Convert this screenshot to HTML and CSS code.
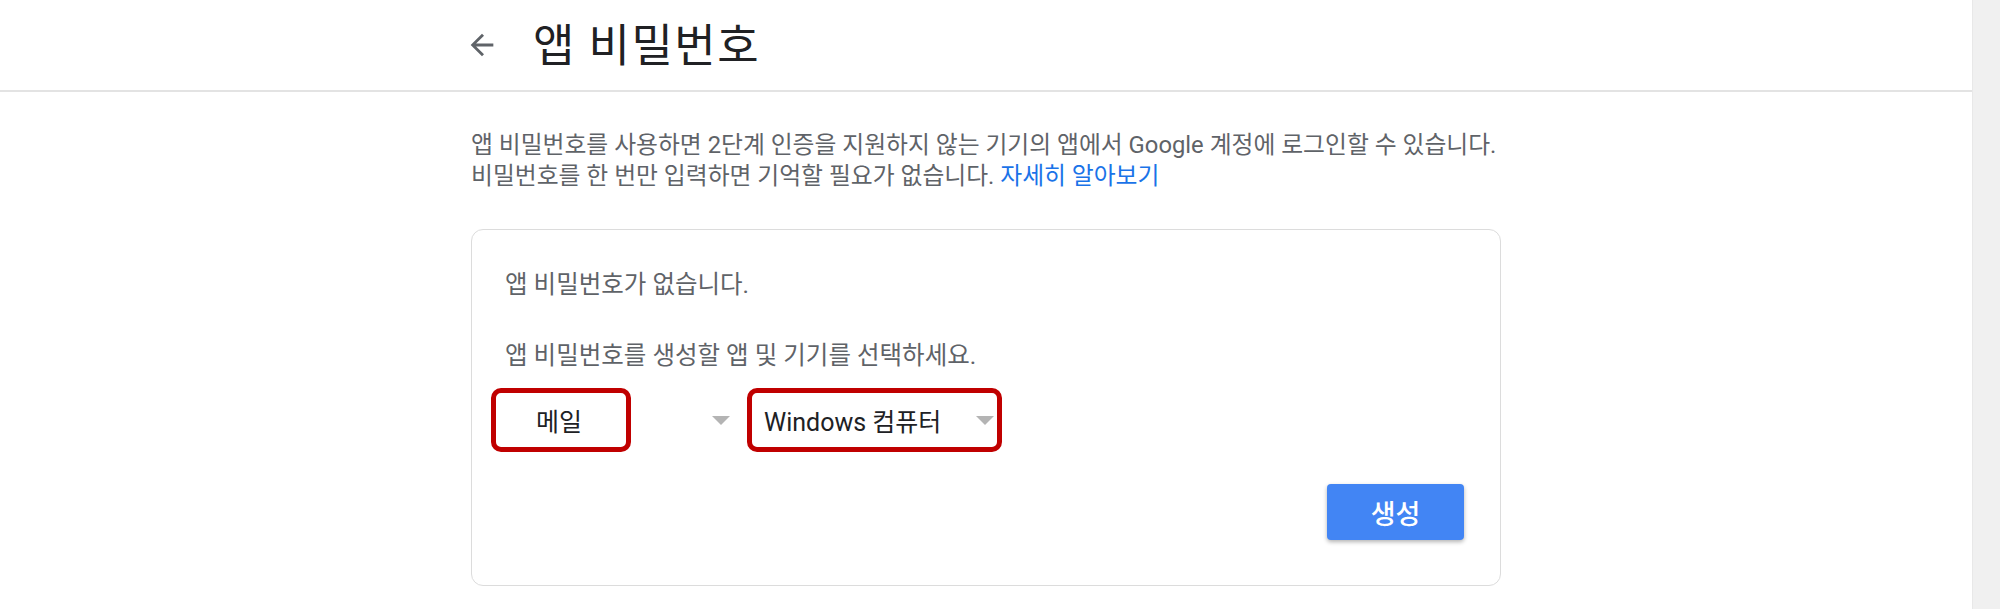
FILE: index.html
```html
<!DOCTYPE html>
<html lang="ko">
  <head>
    <meta charset="UTF-8" />
    <meta name="viewport" content="width=device-width, initial-scale=1.0" />
    <title>앱 비밀번호</title>
    <link rel="stylesheet" href="styles.css">
  </head>
  <body>
    <div class="page">
      <div class="header">
        <div class="header-inner">
          <button class="back" aria-label="뒤로">
            <svg width="24" height="24" viewBox="0 0 24 24">
              <path d="M20 11H7.83l5.59-5.59L12 4l-8 8 8 8 1.41-1.41L7.83 13H20v-2z" fill="#5f6368"/>
            </svg>
          </button>
          <h1>앱 비밀번호</h1>
        </div>
      </div>

      <div class="container">
        <p class="intro">
          앱 비밀번호를 사용하면 2단계 인증을 지원하지 않는 기기의 앱에서 Google 계정에 로그인할 수 있습니다.<br>
          비밀번호를 한 번만 입력하면 기억할 필요가 없습니다. <a href="#">자세히 알아보기</a>
        </p>

        <div class="card">
          <p>앱 비밀번호가 없습니다.</p>
          <p class="hint">앱 비밀번호를 생성할 앱 및 기기를 선택하세요.</p>
          <div class="selects">
            <div class="select select-app">
              <span class="value">메일</span>
              <span class="caret"></span>
              <span class="mark mark-app"></span>
            </div>
            <div class="select select-device">
              <span class="value">Windows 컴퓨터</span>
              <span class="caret"></span>
              <span class="mark mark-device"></span>
            </div>
          </div>
          <div class="actions">
            <button class="generate">생성</button>
          </div>
        </div>
      </div>
    </div>
    <div class="scrollbar"></div>
  </body>
</html>
```

FILE: styles.css
```css
html, body {
  height: 100%;
}
body {
  margin: 0;
  display: flex;
  font-family: Roboto, "Noto Sans CJK KR", sans-serif;
  color: #5f6368;
  background: #fff;
  overflow: hidden;
}
.page {
  flex: 1;
  min-width: 0;
}
.scrollbar {
  width: 27px;
  background: #f0f0f0;
  border-left: 1px solid #e8e8e8;
}
.header {
  height: 90px;
  border-bottom: 2px solid #e3e3e3;
}
.header-inner {
  width: 1030px;
  margin: 0 auto;
  height: 100%;
  display: flex;
  align-items: center;
}
.back {
  border: none;
  background: none;
  padding: 0;
  margin: 0 34px 0 -6px;
  display: flex;
  cursor: pointer;
}
.back svg {
  width: 34px;
  height: 34px;
}
h1 {
  margin: 0 0 6px;
  font-weight: 400;
  font-size: 45px;
  color: #202124;
  letter-spacing: 1.5px;
}
.container {
  width: 1030px;
  margin: 0 auto;
}
.intro {
  margin: 38px 0 37px;
  font-size: 23.8px;
  line-height: 31px;
  white-space: nowrap;
}
.intro a {
  color: #1a73e8;
  text-decoration: none;
}
.card {
  border: 1px solid #dcdcdc;
  border-radius: 12px;
  padding: 39px 36px 45px 33px;
}
.card p {
  margin: 0;
  font-size: 24.5px;
  line-height: 31px;
}
.card .hint {
  margin-top: 40px;
}
.selects {
  margin-top: 17px;
  display: flex;
  gap: 20px;
}
.select {
  position: relative;
  height: 64px;
  display: flex;
  align-items: center;
  justify-content: space-between;
  box-sizing: border-box;
  font-size: 25px;
  color: #202124;
}
.select-app {
  width: 230px;
  padding: 0 5px 0 31px;
}
.select-device {
  width: 245px;
  padding: 0 6px 0 9px;
}
.caret {
  width: 0;
  height: 0;
  border-left: 9px solid transparent;
  border-right: 9px solid transparent;
  border-top: 9px solid #b4b4b4;
}
.mark {
  position: absolute;
  top: 0;
  bottom: 0;
  box-sizing: border-box;
  border: 5px solid #c00000;
  border-radius: 10px;
}
.mark-app {
  left: -14px;
  width: 140px;
}
.mark-device {
  left: -8px;
  width: 255px;
}
.actions {
  margin-top: 32px;
  display: flex;
  justify-content: flex-end;
}
.generate {
  width: 137px;
  height: 56px;
  border: none;
  border-radius: 4px;
  background: #4285f4;
  color: #fff;
  font-family: Roboto, "Noto Sans CJK KR", sans-serif;
  font-size: 27px;
  font-weight: 500;
  box-shadow: 0 2px 4px rgba(0, 0, 0, 0.3);
  cursor: pointer;
}
```
